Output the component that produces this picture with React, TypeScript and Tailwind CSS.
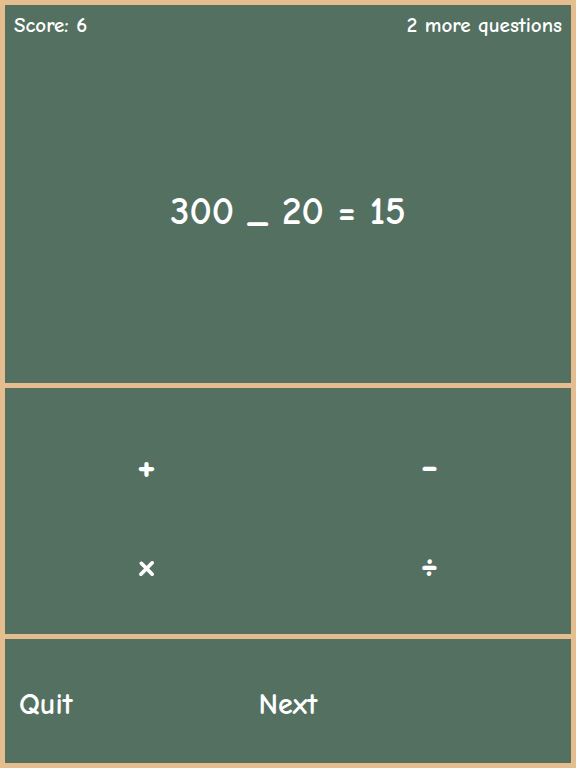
import React from "react";

const font = { fontFamily: '"Comic Sans MS", "Comic Neue", "DejaVu Sans", sans-serif' };

export default function App() {
  return (
    <div
      className="w-[576px] h-[768px] bg-[#e6bd8f] p-[5px] flex flex-col gap-[5px] text-white font-bold"
      style={font}
    >
      <div className="h-[378px] bg-[#537060] flex flex-col">
        <div className="flex justify-between items-center px-[9px] h-[42px] text-[21px]">
          <span>Score: 6</span>
          <span>2 more questions</span>
        </div>
        <div className="flex-1 flex items-start justify-center pt-[136px] text-[39px]">
          <span>300 _ 20 = 15</span>
        </div>
      </div>
      <div className="h-[246px] bg-[#537060] grid grid-cols-2 grid-rows-[98px_98px] content-center pt-[8px]">
        <button className="flex items-center justify-center text-[44px] leading-none">+</button>
        <button className="flex items-center justify-center text-[44px] leading-none">-</button>
        <button className="flex items-center justify-center text-[60px] font-normal leading-none">×</button>
        <button className="flex items-center justify-center text-[44px] leading-none">÷</button>
      </div>
      <div className="flex-1 bg-[#537060] grid grid-cols-3 items-center pt-[6px] text-[30px]">
        <span className="pl-[14px]">Quit</span>
        <span className="text-center">Next</span>
        <span></span>
      </div>
    </div>
  );
}
